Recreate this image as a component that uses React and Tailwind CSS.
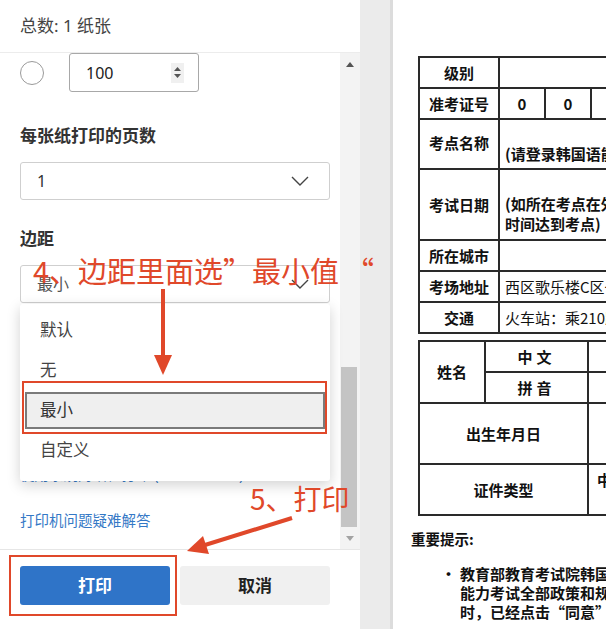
import { useState } from "react";

const FONT = "font-['Noto_Sans','Noto_Sans_CJK_SC',sans-serif]";
const CJK = "font-['Noto_Sans_CJK_SC','Noto_Sans',sans-serif]";

function Chevron() {
  return (
    <svg width="18" height="10" viewBox="0 0 18 10" className="shrink-0">
      <polyline points="1,1 9,9 17,1" fill="none" stroke="#444" strokeWidth="1.4" />
    </svg>
  );
}

function SelectBox({ value, muted }) {
  return (
    <div className="h-[38px] w-full border border-[#cfcfcf] rounded-[3px] flex items-center justify-between pl-4 pr-[20px] bg-white">
      <span className={muted ? "text-[16px] text-[#555]" : "text-[16px] text-[#333]"}>{value}</span>
      <Chevron />
    </div>
  );
}

function Scrollbar() {
  return (
    <div className="w-[20px] h-full bg-[#f3f3f3] flex flex-col">
      <div className="h-[22px] flex items-center justify-center">
        <svg width="8" height="5" viewBox="0 0 8 5">
          <polygon points="0,5 8,5 4,0" fill="#555" />
        </svg>
      </div>
      <div className="h-[292px]" />
      <div className="h-[160px] w-[16px] ml-[1px] bg-[#c4c4c4]" />
      <div className="flex-1" />
      <div className="h-[22px] flex items-center justify-center">
        <svg width="8" height="5" viewBox="0 0 8 5">
          <polygon points="0,0 8,0 4,5" fill="#a3a3a3" />
        </svg>
      </div>
    </div>
  );
}

function Dropdown() {
  const items = ["默认", "无", "最小", "自定义"];
  return (
    <div className="absolute left-5 top-[251px] w-[310px] bg-white rounded-[3px] shadow-[0_4px_14px_rgba(0,0,0,0.18)] pt-[6px] pb-[11px] z-10">
      {items.map((it) =>
        it === "最小" ? (
          <div key={it} className="h-10 flex items-center px-[5px]">
            <div className="h-[37px] w-full border-2 border-[#7a7a7a] bg-[#efefef] flex items-center pl-[13px] text-[16.5px] text-[#333]">
              {it}
            </div>
          </div>
        ) : (
          <div key={it} className="h-10 flex items-center pl-5 text-[16.5px] text-[#444]">
            {it}
          </div>
        )
      )}
    </div>
  );
}

function LeftPanel() {
  const [copies] = useState("100");
  return (
    <div className="w-[360px] h-[629px] flex flex-col bg-white shrink-0">
      <div className="h-[54px] border-b border-[#ececec] flex items-center px-5 text-[17px] text-[#444]">
        总数: 1 纸张
      </div>
      <div className="flex-1 flex relative">
        <div className="w-[340px] pl-5 pr-[10px] flex flex-col">
          <div className="h-[39px] flex items-center">
            <div className="w-[24px] h-[24px] rounded-full border border-[#9a9a9a]" />
            <div className="ml-[25px] w-[130px] h-[39px] border border-[#a8a8a8] rounded-[3px] flex items-center justify-between pl-4 pr-[14px]">
              <span className="text-[16px] text-[#222]">{copies}</span>
              <div className="w-[13px] h-[20px] bg-[#f0f0f0] flex flex-col items-center justify-center gap-[3px]">
                <svg width="7" height="4" viewBox="0 0 7 4">
                  <polygon points="0,4 7,4 3.5,0" fill="#555" />
                </svg>
                <svg width="7" height="4" viewBox="0 0 7 4">
                  <polygon points="0,0 7,0 3.5,4" fill="#555" />
                </svg>
              </div>
            </div>
          </div>
          <div className="mt-8 text-[17px] leading-6 font-semibold text-[#333]">每张纸打印的页数</div>
          <div className="mt-[14px]">
            <SelectBox value="1" />
          </div>
          <div className="mt-[27px] text-[17px] leading-6 font-semibold text-[#333]">边距</div>
          <div className="mt-[14px]">
            <SelectBox value="最小" muted />
          </div>
          <div className="mt-[161px] text-[14.5px] leading-5 text-[#3478c6] whitespace-nowrap">
            使用系统对话框打印 (Ctrl+Shift+P)
          </div>
          <div className="mt-[26px] text-[14.5px] leading-5 text-[#3478c6]">打印机问题疑难解答</div>
        </div>
        <Scrollbar />
        <Dropdown />
      </div>
      <div className="h-[81px] border-t border-[#e6e6e6] px-5 pt-[16px] flex gap-[10px]">
        <button className="w-[150px] h-[39px] rounded-[3px] bg-[#2f74c8] text-white text-[17px] font-bold">
          打印
        </button>
        <button className="w-[150px] h-[39px] rounded-[3px] bg-[#f0f0f0] text-[#222] text-[17px] font-bold">
          取消
        </button>
      </div>
    </div>
  );
}

const td = "border-2 border-[#2a2a2a] text-[15px] font-bold text-[#111] leading-5";

function Document() {
  const zeros = Array.from({ length: 8 });
  return (
    <div className={`flex-1 h-[629px] bg-white overflow-hidden pl-[18px] pt-[56px] ${CJK}`}>
      <table className="ml-[7px] table-fixed border-collapse w-[448px]">
        <colgroup>
          <col className="w-[80px]" />
          {zeros.map((_, i) => (
            <col key={i} className="w-[46px]" />
          ))}
        </colgroup>
        <tbody>
          <tr className="h-[31px]">
            <td className={`${td} text-center`}>级别</td>
            <td className={td} colSpan={8}></td>
          </tr>
          <tr className="h-[31px]">
            <td className={`${td} text-center`}>准考证号</td>
            {zeros.map((_, i) => (
              <td key={i} className={`${td} text-center`}>
                0
              </td>
            ))}
          </tr>
          <tr className="h-[50px]">
            <td className={`${td} text-center align-middle pb-[3px]`}>考点名称</td>
            <td className={`${td} align-bottom pl-[5px] pb-[4px] whitespace-nowrap`} colSpan={8}>
              (请登录韩国语能力考试官网查询)
            </td>
          </tr>
          <tr className="h-[71px]">
            <td className={`${td} text-center`}>考试日期</td>
            <td className={`${td} align-bottom pl-[5px] pb-[5px] whitespace-nowrap`} colSpan={8}>
              <div>(如所在考点在外地，请提前安排</div>
              <div>时间达到考点)</div>
            </td>
          </tr>
          <tr className="h-[31px]">
            <td className={`${td} text-center`}>所在城市</td>
            <td className={td} colSpan={8}></td>
          </tr>
          <tr className="h-[31px]">
            <td className={`${td} text-center`}>考场地址</td>
            <td className={`${td} font-normal pl-[5px] whitespace-nowrap`} colSpan={8}>
              西区歌乐楼C区一楼
            </td>
          </tr>
          <tr className="h-[31px]">
            <td className={`${td} text-center`}>交通</td>
            <td className={`${td} font-normal pl-[5px] whitespace-nowrap`} colSpan={8}>
              火车站：乘210路公交车
            </td>
          </tr>
        </tbody>
      </table>
      <table className="ml-[7px] mt-[6px] table-fixed border-collapse w-[470px]">
        <colgroup>
          <col className="w-[66px]" />
          <col className="w-[103px]" />
          <col className="w-[301px]" />
        </colgroup>
        <tbody>
          <tr className="h-[31px]">
            <td className={`${td} text-center`} rowSpan={2}>
              姓名
            </td>
            <td className={`${td} text-center tracking-[4px]`}>中文</td>
            <td className={td}></td>
          </tr>
          <tr className="h-[31px]">
            <td className={`${td} text-center tracking-[4px]`}>拼音</td>
            <td className={td}></td>
          </tr>
          <tr className="h-[61px]">
            <td className={`${td} text-center`} colSpan={2}>
              出生年月日
            </td>
            <td className={td}></td>
          </tr>
          <tr className="h-[51px]">
            <td className={`${td} text-center`} colSpan={2}>
              证件类型
            </td>
            <td className={`${td} align-top pt-[5px] pl-[8px] whitespace-nowrap`}>中国居民身份证</td>
          </tr>
        </tbody>
      </table>
      <div className="mt-[13px] text-[14.5px] leading-5 font-bold text-[#111]">重要提示:</div>
      <div className="mt-[15px] flex text-[15px] leading-[19px] font-bold text-[#111]">
        <div className="w-[49px] pl-[30px] shrink-0">•</div>
        <div className="whitespace-nowrap">
          <div>教育部教育考试院韩国语</div>
          <div>能力考试全部政策和规定</div>
          <div>时，已经点击“同意”之后</div>
        </div>
      </div>
    </div>
  );
}

function Annotations() {
  return (
    <>
      <div className={`absolute left-[33px] top-[256px] text-[29px] leading-none text-[#e0482a] whitespace-nowrap z-20 ${CJK}`}>
        4、边距里面选”最小值<span className="ml-[6px]">“</span>
      </div>
      <div className={`absolute left-[250px] top-[484px] text-[28px] leading-none text-[#e0482a] whitespace-nowrap z-20 ${CJK}`}>
        5、打印
      </div>
      <svg className="absolute left-0 top-0 pointer-events-none z-20" width="606" height="629" viewBox="0 0 606 629">
        <line x1="163" y1="289" x2="163" y2="358" stroke="#e0482a" strokeWidth="4" />
        <polygon points="154,355 172,355 163,375" fill="#e0482a" />
        <line x1="292" y1="518" x2="205" y2="545" stroke="#e0482a" strokeWidth="4" />
        <polygon points="187,551 209,554 203,536" fill="#e0482a" />
      </svg>
      <div className="absolute left-[22px] top-[381px] w-[305px] h-[53px] border-2 border-[#e0482a] z-20" />
      <div className="absolute left-[9px] top-[555px] w-[168px] h-[61px] border-2 border-[#e0482a] z-20" />
    </>
  );
}

export default function App() {
  return (
    <div className={`relative w-[606px] h-[629px] overflow-hidden flex bg-white ${FONT}`}>
      <LeftPanel />
      <div className="w-[33px] h-[629px] bg-[#ebebeb] border-r-[3px] border-[#dcdcdc] shrink-0" />
      <Document />
      <Annotations />
    </div>
  );
}
